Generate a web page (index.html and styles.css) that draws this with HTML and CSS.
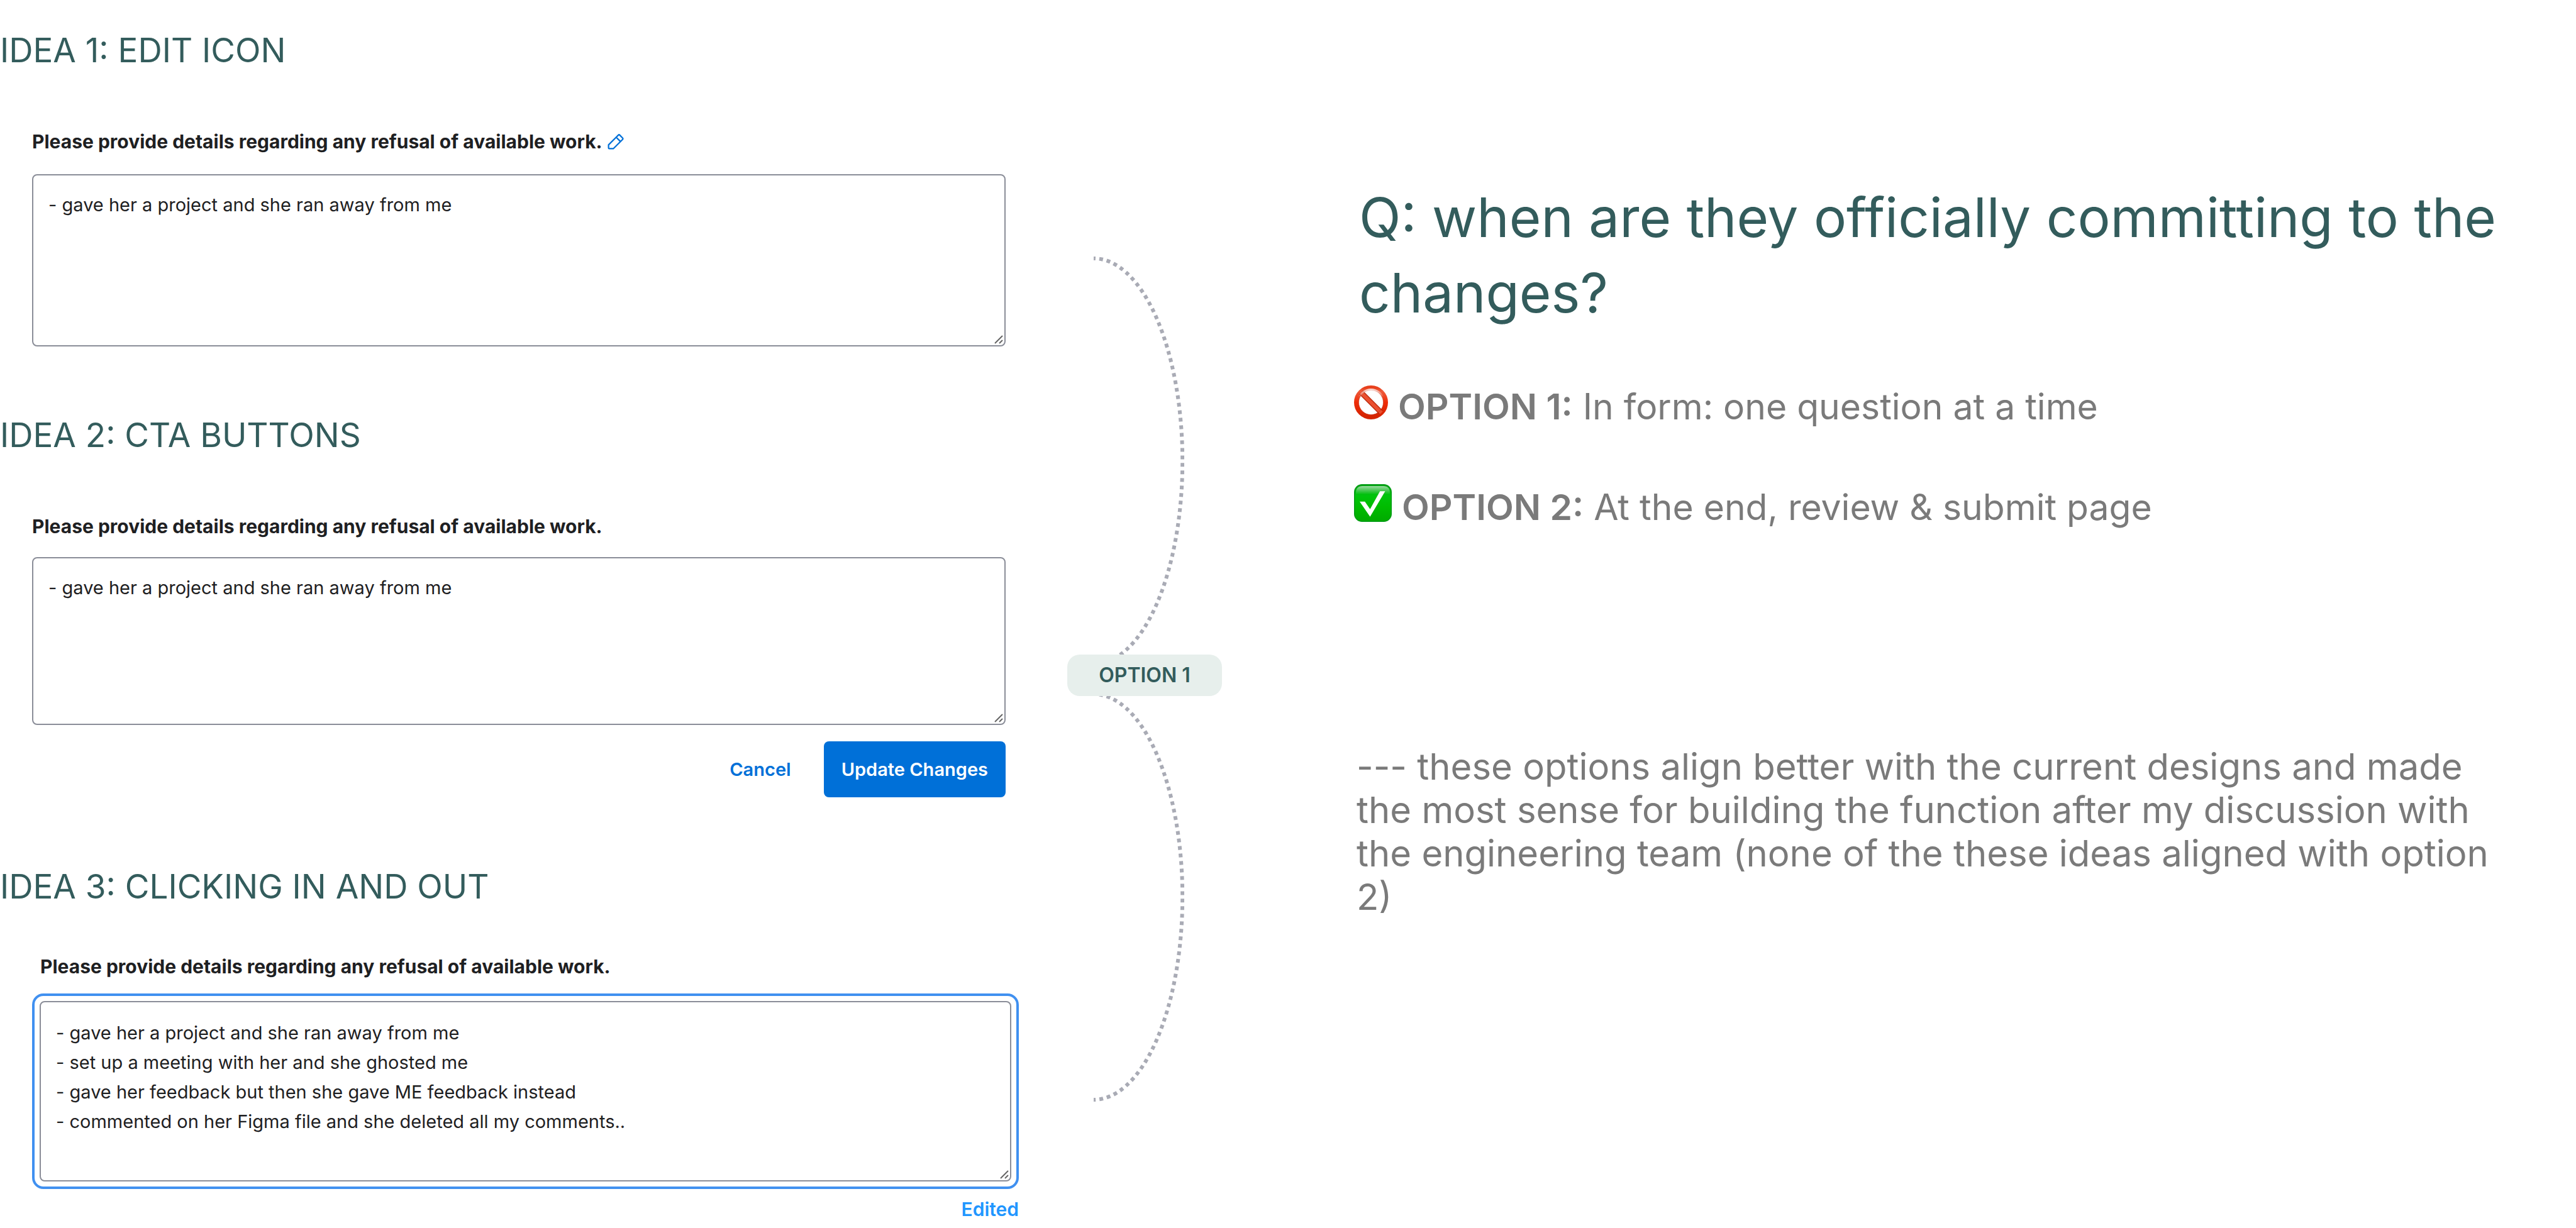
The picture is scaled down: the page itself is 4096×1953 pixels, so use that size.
FILE: index.html
```html
<!DOCTYPE html>
<html lang="en">
<head>
<meta charset="utf-8">
<meta name="viewport" content="width=device-width, initial-scale=1">
<title>Edit interaction ideas</title>
<link rel="stylesheet" href="styles.css">
</head>
<body>
<main class="board">
  <div class="ideas">
    <section class="idea idea-icon">
      <h2 class="idea-title">IDEA 1: EDIT ICON</h2>
      <div class="field">
        <div class="label-row">
          <label class="label" for="details-1">Please provide details regarding any refusal of available work.</label>
          <button class="icon-button" type="button" aria-label="Edit">
            <svg class="pencil" viewBox="0 0 34 33" aria-hidden="true"><path d="M2 23 L19 6 L22.500 2.500 Q24 1 25.500 2.500 L31.500 8.500 Q33 10 31.500 11.500 L12 31 H3.500 Q2 31 2 29.500 Z M18 7 L27 16"/></svg>
          </button>
        </div>
        <div class="input-wrap">
          <textarea class="input" id="details-1">- gave her a project and she ran away from me</textarea>
          <svg class="grip" viewBox="0 0 14 14" aria-hidden="true"><path d="M1 13 L13 1 M8 13 L13 8"/></svg>
        </div>
      </div>
    </section>

    <section class="idea idea-cta">
      <h2 class="idea-title">IDEA 2: CTA BUTTONS</h2>
      <div class="field">
        <div class="label-row">
          <label class="label" for="details-2">Please provide details regarding any refusal of available work.</label>
        </div>
        <div class="input-wrap">
          <textarea class="input" id="details-2">- gave her a project and she ran away from me</textarea>
          <svg class="grip" viewBox="0 0 14 14" aria-hidden="true"><path d="M1 13 L13 1 M8 13 L13 8"/></svg>
        </div>
        <div class="actions">
          <button class="button button-text" type="button">Cancel</button>
          <button class="button button-primary" type="button">Update Changes</button>
        </div>
      </div>
    </section>

    <section class="idea idea-click">
      <h2 class="idea-title">IDEA 3: CLICKING IN AND OUT</h2>
      <div class="field">
        <div class="label-row">
          <label class="label" for="details-3">Please provide details regarding any refusal of available work.</label>
        </div>
        <div class="focus-ring">
          <div class="input-wrap">
            <textarea class="input" id="details-3">- gave her a project and she ran away from me
- set up a meeting with her and she ghosted me
- gave her feedback but then she gave ME feedback instead
- commented on her Figma file and she deleted all my comments..</textarea>
            <svg class="grip" viewBox="0 0 14 14" aria-hidden="true"><path d="M1 13 L13 1 M8 13 L13 8"/></svg>
          </div>
        </div>
        <p class="status">Edited</p>
      </div>
    </section>
  </div>

  <div class="connector">
    <svg class="arc arc-top" viewBox="0 0 144 633" aria-hidden="true"><path d="M0 3 A141 322 0 0 1 0 648"/></svg>
    <span class="badge">OPTION 1</span>
    <svg class="arc arc-bottom" viewBox="0 0 144 645" aria-hidden="true"><path d="M0 -3 A141 322 0 0 1 0 642"/></svg>
  </div>

  <section class="notes">
    <h1 class="question">Q: when are they officially committing to the changes?</h1>
    <ul class="options">
      <li class="option">
        <svg class="mark mark-no" viewBox="0 0 72 72" aria-hidden="true">
          <defs>
            <linearGradient id="red" x1="0" y1="0" x2="0" y2="1"><stop offset="0" stop-color="#e8401c"/><stop offset=".12" stop-color="#ee5c3c"/><stop offset=".5" stop-color="#ee2c08"/><stop offset="1" stop-color="#d42400"/></linearGradient>
            <linearGradient id="shine" x1="0" y1="0" x2="0" y2="1"><stop offset="0" stop-color="#fff" stop-opacity=".85"/><stop offset="1" stop-color="#fff" stop-opacity="0"/></linearGradient>
          </defs>
          <circle cx="36" cy="36" r="31" fill="none" stroke="url(#red)" stroke-width="10"/>
          <path d="M15 15 L57 57" stroke="#b82408" stroke-width="11"/>
          <path d="M14 14 L58 58" stroke="#ea5030" stroke-width="8"/>
          <circle cx="36" cy="36" r="26" fill="none" stroke="#b82408" stroke-width="1" stroke-opacity=".7"/>
          <path d="M9 25 A29 29 0 0 1 63 25 L58 25 A25 25 0 0 0 19 17 L14 24 Z" fill="url(#shine)"/>
        </svg>
        <span><strong>OPTION 1:</strong> In form: one question at a time</span>
      </li>
      <li class="option">
        <svg class="mark mark-yes" viewBox="0 0 80 80" aria-hidden="true">
          <defs>
            <linearGradient id="green" x1="0" y1="0" x2="0" y2="1"><stop offset="0" stop-color="#00a010"/><stop offset=".3" stop-color="#00c40c"/><stop offset=".6" stop-color="#00bc00"/><stop offset="1" stop-color="#00aa00"/></linearGradient>
            <linearGradient id="gloss" x1="0" y1="0" x2="0" y2="1"><stop offset="0" stop-color="#fff" stop-opacity=".6"/><stop offset="1" stop-color="#fff" stop-opacity="0"/></linearGradient>
          </defs>
          <rect x="1" y="1" width="78" height="78" rx="16" fill="url(#green)" stroke="#009a14" stroke-width="2"/>
          <path d="M4 22 V18 Q4 4 18 4 H62 Q76 4 76 18 V22 Z" fill="url(#gloss)"/>
          <path d="M12 37 H23 L34 53 L55 15 H66 L34 69 Z" fill="#fff"/>
        </svg>
        <span><strong>OPTION 2:</strong> At the end, review &amp; submit page</span>
      </li>
    </ul>
    <p class="rationale">--- these options align better with the current designs and made the most sense for building the function after my discussion with the engineering team (none of the these ideas aligned with option 2)</p>
  </section>
</main>
</body>
</html>
```

FILE: styles.css
```css
* {
  box-sizing: border-box;
}

body {
  margin: 0;
  background: #fff;
  color: #1e2022;
  font-family: Inter, "Liberation Sans", sans-serif;
}

h1,
h2,
p,
ul {
  margin: 0;
  padding: 0;
  font-weight: 400;
}

.board {
  display: grid;
  grid-template-columns: minmax(0, 1697fr) 246px minmax(0, 2153fr);
  align-items: start;
}

/* Left column: the three ideas */

.ideas {
  padding: 48px 77px 0 0;
}

.idea-title {
  color: #335c5c;
  font-size: 53px;
  line-height: 64px;
}

.field {
  display: flex;
  flex-direction: column;
  padding: 93px 21px 0 51px;
}

.idea-cta {
  margin-top: 109px;
}

.idea-click {
  margin-top: 110px;
}

.idea-click .field {
  padding: 75px 0 0 51px;
}

.label-row {
  display: flex;
  align-items: center;
  gap: 8px;
  margin-bottom: 32px;
}

.idea-cta .label-row {
  margin-bottom: 29px;
}

.idea-click .label-row {
  margin: 0 0 23px 13px;
}

.label {
  font-size: 30px;
  font-weight: 700;
  line-height: 40px;
}

.icon-button {
  display: flex;
  padding: 0;
  border: 0;
  background: none;
}

.pencil {
  width: 26px;
  height: 25px;
  fill: none;
  stroke: #0070d8;
  stroke-width: 3;
}

.input-wrap {
  position: relative;
  display: flex;
}

.input {
  flex: 1;
  height: 274px;
  padding: 23px 24px;
  border: 2px solid #8a8d98;
  border-radius: 8px;
  background: #fff;
  color: #1e2022;
  font: 400 29px/47px Inter, "Liberation Sans", sans-serif;
  resize: none;
  overflow: hidden;
}

.idea-cta .input {
  height: 267px;
}

.idea-click .input {
  height: 287px;
  padding-top: 25px;
}

.grip {
  position: absolute;
  right: 4px;
  bottom: 4px;
  width: 14px;
  height: 14px;
  fill: none;
  stroke: #666;
  stroke-width: 2;
}

.focus-ring {
  padding: 8px;
  border: 4px solid #4090f0;
  border-radius: 18px;
}

.actions {
  display: flex;
  justify-content: flex-end;
  gap: 24px;
  margin-top: 26px;
}

.button {
  height: 89px;
  padding: 0 28px;
  border: 0;
  border-radius: 8px;
  font: 600 29px/40px Inter, "Liberation Sans", sans-serif;
}

.button-text {
  background: none;
  color: #0070d8;
}

.button-primary {
  background: #0070d8;
  color: #fff;
}

.status {
  margin-top: 12px;
  color: #2196ff;
  font-size: 30px;
  font-weight: 600;
  line-height: 40px;
  text-align: right;
}

/* Middle column: dotted arcs joined by the badge */

.connector {
  display: flex;
  flex-direction: column;
  padding-top: 408px;
}

.arc {
  display: block;
  width: 144px;
  margin-left: 42px;
  fill: none;
  stroke: #a9abb5;
  stroke-width: 6;
  stroke-dasharray: 6 6;
  stroke-dashoffset: 3;
}

.arc-top {
  height: 633px;
}

.arc-bottom {
  height: 645px;
}

.badge {
  border-radius: 20px;
  background: #e7efec;
  color: #335c5c;
  font-size: 32px;
  font-weight: 600;
  line-height: 66px;
  text-align: center;
}

/* Right column: question and notes */

.notes {
  padding: 286px 110px 0 210px;
}

.question {
  padding-left: 8px;
  color: #335c5c;
  font-size: 87px;
  line-height: 120px;
}

.options {
  display: flex;
  flex-direction: column;
  gap: 80px;
  margin-top: 81px;
  list-style: none;
}

.option {
  display: flex;
  align-items: center;
  gap: 16px;
  color: #7a7a7a;
  font-size: 57px;
  line-height: 80px;
}

.option strong {
  font-weight: 600;
}

.mark {
  margin-bottom: 14px;
}

.mark-no {
  width: 54px;
  height: 54px;
}

.mark-yes {
  width: 60px;
  height: 60px;
}

.rationale {
  margin-top: 338px;
  padding-left: 4px;
  color: #7a7a7a;
  font-size: 58px;
  line-height: 69px;
}
```
